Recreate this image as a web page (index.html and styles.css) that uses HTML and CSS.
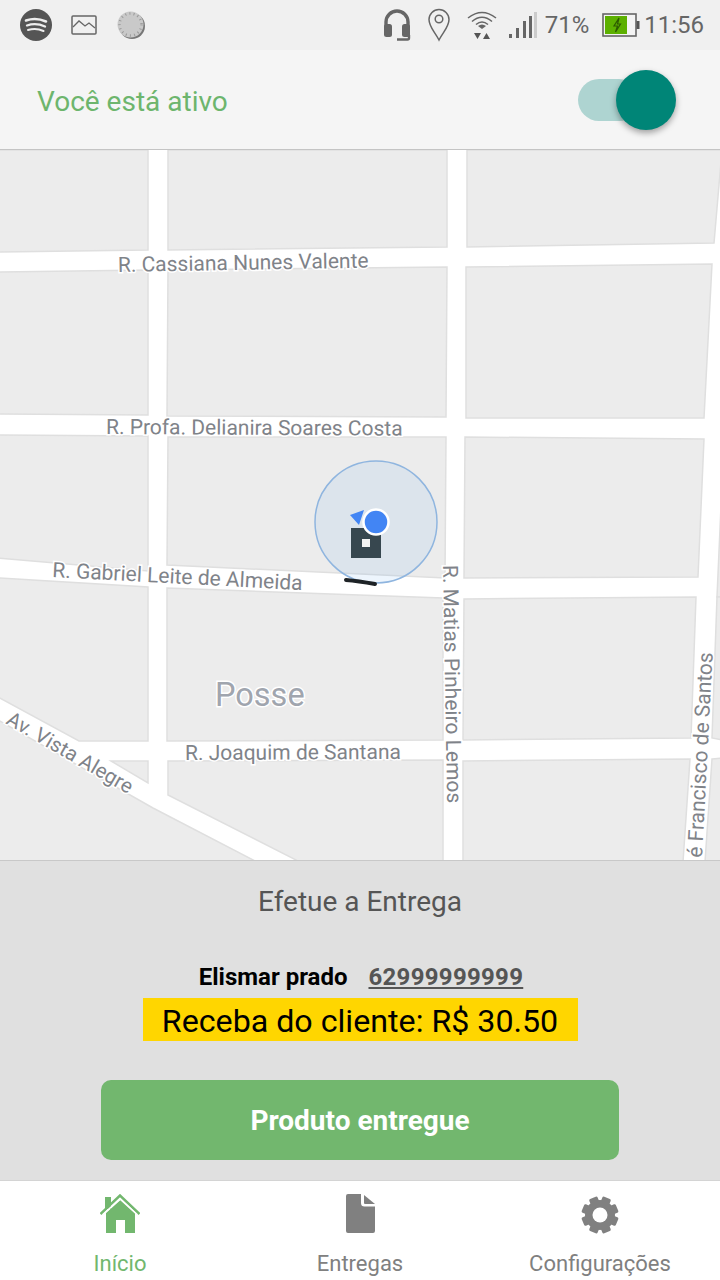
FILE: index.html
```html
<!DOCTYPE html>
<html lang="pt">
<head>
    <meta charset="UTF-8">
    <meta name="viewport" content="width=device-width, initial-scale=1.0">
    <title>Entregas</title>
    <link rel="stylesheet" href="styles.css">
</head>
<body>
    <div class="app">
        <div class="status-bar">
            <div class="status-left">
                <svg class="icon-spotify" viewBox="0 0 32 32">
                    <circle cx="16" cy="16" r="16" fill="#555"/>
                    <path d="M6 11.5 Q16 8 26 12.5" fill="none" stroke="#eee" stroke-width="2.6" stroke-linecap="round"/>
                    <path d="M7 16.5 Q16 13.5 25 17.5" fill="none" stroke="#eee" stroke-width="2.3" stroke-linecap="round"/>
                    <path d="M8 21 Q16 18.5 23.5 22" fill="none" stroke="#eee" stroke-width="2" stroke-linecap="round"/>
                </svg>
                <svg class="icon-image" viewBox="0 0 26 20">
                    <rect x="1" y="1" width="24" height="18" rx="1" fill="none" stroke="#666" stroke-width="1.5"/>
                    <path d="M2 12 L8 6 L14 11 L18 8 L24 13" fill="none" stroke="#666" stroke-width="1.3"/>
                </svg>
                <svg class="icon-disc" viewBox="0 0 30 30">
                    <circle cx="16" cy="16" r="13" fill="#777"/>
                    <circle cx="14.5" cy="14.5" r="13" fill="#c9c9c9"/>
                    <circle cx="14.5" cy="14.5" r="11" fill="none" stroke="#999" stroke-width="2.5" stroke-dasharray="1 3.2"/>
                </svg>
            </div>
            <div class="status-right">
                <svg class="icon-headset" viewBox="0 0 28 32">
                    <path d="M3 19 V13 A11 11 0 0 1 25 13 V19" fill="none" stroke="#666" stroke-width="3.4"/>
                    <rect x="1" y="15" width="8" height="13" rx="2.5" fill="#666"/>
                    <rect x="19" y="15" width="8" height="13" rx="2.5" fill="#666"/>
                    <path d="M26 26 V29 A1.5 1.5 0 0 1 24.5 30.5 H14" fill="none" stroke="#666" stroke-width="2.4"/>
                </svg>
                <svg class="icon-pin" viewBox="0 0 24 34">
                    <path d="M12 32 C8 24 2 19 2 11.5 A10 10 0 0 1 22 11.5 C22 19 16 24 12 32 Z" fill="none" stroke="#666" stroke-width="1.5"/>
                    <circle cx="12" cy="11" r="3.8" fill="none" stroke="#666" stroke-width="1.5"/>
                </svg>
                <svg class="icon-wifi" viewBox="0 0 30 32">
                    <path d="M1 9 Q15 -2 29 9" fill="none" stroke="#666" stroke-width="1.5"/>
                    <path d="M5 12.5 Q15 4 25 12.5" fill="none" stroke="#666" stroke-width="1.5"/>
                    <path d="M9 15.5 Q15 10.5 21 15.5" fill="none" stroke="#666" stroke-width="1.6"/>
                    <path d="M11 17 Q15 14 19 17 L15 20 Z" fill="#666"/>
                    <path d="M7 24 H14 L10.5 30 Z M16 30 H23 L19.5 24 Z" fill="#555"/>
                </svg>
                <svg class="icon-signal" viewBox="0 0 28 28">
                    <rect x="0" y="23" width="3" height="4" fill="#666"/>
                    <rect x="7" y="17" width="3" height="10" fill="#666"/>
                    <rect x="14" y="10" width="3" height="17" fill="#666"/>
                    <rect x="20" y="5" width="3" height="22" fill="#666"/>
                    <rect x="25" y="1" width="3" height="26" fill="#ccc"/>
                </svg>
                <span class="status-text percent">71%</span>
                <svg class="icon-battery" viewBox="0 0 38 24">
                    <rect x="1" y="1" width="33" height="22" fill="#f4f4f4" stroke="#666" stroke-width="1.6"/>
                    <rect x="3" y="3" width="22" height="18" fill="#5cb000"/>
                    <rect x="34.5" y="8" width="3" height="8" fill="#555"/>
                    <path d="M17 5 L12 13 H15.5 L13.5 19 L18.5 11 H15.5 Z" fill="none" stroke="#2c5a00" stroke-width="1.2"/>
                </svg>
                <span class="status-text clock">11:56</span>
            </div>
        </div>

        <header class="active-bar">
            <span class="active-label">Você está ativo</span>
            <div class="switch">
                <div class="switch-thumb"></div>
            </div>
        </header>

        <div class="map">
            <svg class="map-svg" viewBox="0 150 720 710">
                <rect x="0" y="150" width="720" height="710" fill="#fff"/>
                <g class="block">
                    <polygon points="-2,150 148,150 148,250 -2,252"/>
                    <polygon points="168,150 447,150 447,247 168,250"/>
                    <polygon points="467,150 722,150 714,243 467,247"/>
                    <polygon points="-2,272 148,270 148,415 -2,414"/>
                    <polygon points="168,270 447,267 446,417 167,416"/>
                    <polygon points="466,267 712,264 704,418 466,418"/>
                    <polygon points="-2,435 148,436 148,571 -2,558"/>
                    <polygon points="168,437 446,437 445,578 167,565"/>
                    <polygon points="465,437 704,439 698,577 464,578"/>
                    <polygon points="722,438 722,597 717,597 724,438"/>
                    <polygon points="-2,578 148,587 148,741 79,741 -2,697"/>
                    <polygon points="167,588 443,598 443,740 167,741"/>
                    <polygon points="464,599 696,597 691,738 463,740"/>
                    <polygon points="717,597 722,597 722,740 712,738"/>
                    <polygon points="111,761 148,761 148,783"/>
                    <polygon points="-2,720 153,808 257,862 -2,862"/>
                    <polygon points="168,761 443,760 443,862 300,862 168,795"/>
                    <polygon points="463,761 690,759 683,862 463,862"/>
                    <polygon points="712,759 722,758 722,862 705,862"/>
                </g>
                <text class="street" x="118" y="272" transform="rotate(-1 118 272)">R. Cassiana Nunes Valente</text>
                <text class="street" x="106" y="434" transform="rotate(0.3 106 434)">R. Profa. Delianira Soares Costa</text>
                <text class="street" x="52" y="577" transform="rotate(3 52 577)">R. Gabriel Leite de Almeida</text>
                <text class="street" x="185" y="760" transform="rotate(-0.3 185 760)">R. Joaquim de Santana</text>
                <text class="street" x="443" y="565" transform="rotate(89 443 565)">R. Matias Pinheiro Lemos</text>
                <text class="street" x="702" y="858" transform="rotate(-87 702 858)">é Francisco de Santos</text>
                <text class="street street-avenue" x="5" y="723" transform="rotate(30 5 723)">Av. Vista Alegre</text>
                <text class="place" x="215" y="706">Posse</text>

                <circle cx="376" cy="522" r="61" fill="#4a9be9" fill-opacity="0.1" stroke="#8fb5df" stroke-width="1.5"/>
                <rect x="351" y="528" width="30" height="30" fill="#37474f"/>
                <rect x="362" y="539" width="8" height="8" fill="#f2f2f2"/>
                <polygon points="350,515 364,510 359,525" fill="#4285f4"/>
                <circle cx="376" cy="522" r="12.5" fill="#4285f4" stroke="#fff" stroke-width="2.5"/>
                <path d="M346 580 Q358 581 375 584" fill="none" stroke="#1d2226" stroke-width="4" stroke-linecap="round"/>
            </svg>
        </div>

        <section class="delivery">
            <h2 class="delivery-title">Efetue a Entrega</h2>
            <div class="customer">
                <span class="customer-name">Elismar prado</span>
                <a class="customer-phone" href="#">62999999999</a>
            </div>
            <div class="charge">Receba do cliente: R$ 30.50</div>
            <button class="done-btn">Produto entregue</button>
        </section>

        <nav class="tabs">
            <div class="tab tab-active">
                <svg class="tab-icon" viewBox="0 0 40 40">
                    <rect x="5" y="3" width="6" height="12" fill="#72b76e"/>
                    <path d="M6 19 L20.5 6 L35 19 V39 H25 V26 H16 V39 H6 Z" fill="#72b76e"/>
                    <path d="M0.5 20 L20 1.5 L39.5 20" fill="none" stroke="#72b76e" stroke-width="2.5"/>
                    <path d="M3 20.5 L20 4.8 L37 20.5" fill="none" stroke="#fff" stroke-width="1.6"/>
                </svg>
                <span class="tab-label">Início</span>
            </div>
            <div class="tab">
                <svg class="tab-icon" viewBox="0 0 40 40">
                    <path d="M6 2 A2 2 0 0 1 8 0 H21 V9 A3.5 3.5 0 0 0 24.5 12.5 H35 V37 A2 2 0 0 1 33 39 H8 A2 2 0 0 1 6 37 Z" fill="#808080"/>
                    <path d="M24 1 L35 10 H25 A1 1 0 0 1 24 9 Z" fill="#808080"/>
                </svg>
                <span class="tab-label">Entregas</span>
            </div>
            <div class="tab">
                <svg class="tab-icon" viewBox="0 0 40 40">
                    <g fill="#808080">
                        <circle cx="20" cy="21" r="15"/>
                        <rect x="15.5" y="2.5" width="9" height="9" rx="1.5" transform="rotate(22.5 20 21)"/>
                        <rect x="15.5" y="2.5" width="9" height="9" rx="1.5" transform="rotate(67.5 20 21)"/>
                        <rect x="15.5" y="2.5" width="9" height="9" rx="1.5" transform="rotate(112.5 20 21)"/>
                        <rect x="15.5" y="2.5" width="9" height="9" rx="1.5" transform="rotate(157.5 20 21)"/>
                        <rect x="15.5" y="2.5" width="9" height="9" rx="1.5" transform="rotate(202.5 20 21)"/>
                        <rect x="15.5" y="2.5" width="9" height="9" rx="1.5" transform="rotate(247.5 20 21)"/>
                        <rect x="15.5" y="2.5" width="9" height="9" rx="1.5" transform="rotate(292.5 20 21)"/>
                        <rect x="15.5" y="2.5" width="9" height="9" rx="1.5" transform="rotate(337.5 20 21)"/>
                    </g>
                    <circle cx="20" cy="21" r="7.5" fill="#fff"/>
                </svg>
                <span class="tab-label">Configurações</span>
            </div>
        </nav>
    </div>
</body>
</html>
```

FILE: styles.css
```css
html, body {
    margin: 0;
    padding: 0;
}

body {
    font-family: Roboto, "Noto Sans", sans-serif;
    background-color: #fff;
}

.app {
    width: 720px;
    height: 1280px;
    display: flex;
    flex-direction: column;
    overflow: hidden;
}

/* status bar */
.status-bar {
    height: 50px;
    background-color: #f0f0f0;
    display: flex;
    justify-content: space-between;
    align-items: center;
    flex-shrink: 0;
}

.status-left {
    display: flex;
    align-items: center;
    padding-left: 20px;
}

.status-right {
    display: flex;
    align-items: center;
    padding-right: 16px;
}

.icon-spotify {
    width: 32px;
    height: 32px;
}

.icon-image {
    width: 26px;
    height: 20px;
    margin-left: 19px;
}

.icon-disc {
    width: 30px;
    height: 30px;
    margin-left: 19px;
}

.icon-headset {
    width: 28px;
    height: 32px;
}

.icon-pin {
    width: 24px;
    height: 34px;
    margin-left: 16px;
}

.icon-wifi {
    width: 30px;
    height: 32px;
    margin-left: 16px;
}

.icon-signal {
    width: 28px;
    height: 28px;
    margin-left: 12px;
}

.icon-battery {
    width: 38px;
    height: 24px;
    margin-left: 13px;
}

.status-text {
    font-size: 24px;
    color: #666;
}

.percent {
    margin-left: 8px;
}

.clock {
    margin-left: 4px;
}

/* active toggle */
.active-bar {
    height: 99px;
    background-color: #f5f5f5;
    border-bottom: 1px solid #c4c4c4;
    display: flex;
    justify-content: space-between;
    align-items: center;
    padding: 0 44px 0 37px;
    flex-shrink: 0;
}

.active-label {
    margin-top: 4px;
    font-size: 28px;
    color: #6db56d;
}

.switch {
    position: relative;
    width: 62px;
    height: 42px;
    margin-right: 36px;
    border-radius: 21px;
    background-color: #aed4d1;
}

.switch-thumb {
    position: absolute;
    top: -9px;
    left: 38px;
    width: 60px;
    height: 60px;
    border-radius: 50%;
    background-color: #008577;
    box-shadow: 0 3px 6px rgba(0, 0, 0, 0.35);
}

/* map */
.map {
    height: 710px;
    flex-shrink: 0;
}

.map-svg {
    display: block;
    width: 720px;
    height: 710px;
}

.block polygon {
    fill: #ececec;
    stroke: #dfdfdf;
    stroke-width: 1.5;
}

.street {
    font-size: 21px;
    fill: #7f8389;
    stroke: #fff;
    stroke-width: 3px;
    paint-order: stroke;
}

.street-avenue {
    font-size: 20.5px;
}

.place {
    font-size: 32.5px;
    fill: #a0a5ae;
    stroke: #fff;
    stroke-width: 3px;
    paint-order: stroke;
}

/* delivery panel */
.delivery {
    height: 320px;
    background-color: #e0e0e0;
    border-top: 1px solid #c8c8c8;
    box-sizing: border-box;
    display: flex;
    flex-direction: column;
    align-items: center;
    flex-shrink: 0;
}

.delivery-title {
    margin: 23px 0 0;
    font-size: 28px;
    line-height: 36px;
    font-weight: 400;
    color: #555;
}

.customer {
    margin-top: 42px;
    margin-left: 2px;
    display: flex;
    gap: 21px;
    font-size: 24px;
    line-height: 30px;
    font-weight: 700;
}

.customer-name {
    color: #000;
}

.customer-phone {
    color: #555;
    letter-spacing: 0.3px;
    text-decoration: underline;
}

.charge {
    width: 435px;
    height: 43px;
    margin-top: 6px;
    background-color: #ffd600;
    color: #000;
    font-size: 32.2px;
    line-height: 46px;
    text-align: center;
}

.done-btn {
    width: 518px;
    height: 80px;
    margin-top: 39px;
    border: 0;
    border-radius: 10px;
    background-color: #72b76e;
    color: #fff;
    font-family: inherit;
    font-size: 28px;
    font-weight: 700;
}

/* bottom tabs */
.tabs {
    height: 100px;
    background-color: #fff;
    border-top: 1px solid #d4d4d4;
    box-sizing: border-box;
    display: flex;
    flex-shrink: 0;
}

.tab {
    flex: 1;
    display: flex;
    flex-direction: column;
    align-items: center;
    padding-top: 13px;
}

.tab-icon {
    width: 40px;
    height: 40px;
}

.tab-label {
    margin-top: 15px;
    font-size: 22px;
    line-height: 30px;
    color: #808080;
}

.tab-active .tab-label {
    color: #72b76e;
}
```
